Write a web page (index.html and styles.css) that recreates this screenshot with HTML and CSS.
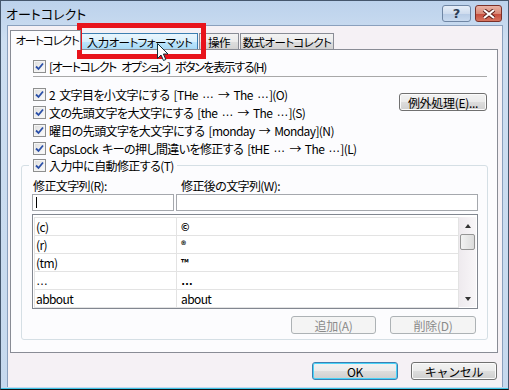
FILE: index.html
```html
<!DOCTYPE html>
<html lang="ja">
<head>
  <meta charset="UTF-8">
  <title>オートコレクト</title>
  <link rel="stylesheet" href="styles.css">
</head>
<body>
  <div class="window">
    <div class="titlebar">
      <span class="title">オートコレクト</span>
      <div class="caption">
        <span class="cap-btn help">?</span>
        <span class="cap-btn close">
          <svg width="14" height="10" viewBox="0 0 14 10"><path d="M2 1 L12 9 M12 1 L2 9" stroke="#5a1f1a" stroke-width="4"/><path d="M2 1 L12 9 M12 1 L2 9" stroke="#fff" stroke-width="2.2"/></svg>
        </span>
      </div>
    </div>

    <div class="client">
      <div class="tabs">
        <span class="tab active">オートコレクト</span>
        <span class="tab hover">入力オートフォーマット</span>
        <span class="tab t3">操作</span>
        <span class="tab t4">数式オートコレクト</span>
      </div>

      <div class="panel">
        <div class="row first"><span class="cb"><svg viewBox="0 0 9 9"><path d="M1 4.5 L3.5 7 L8 1.5"/></svg></span><span class="tight">[オートコレクト オプション] ボタンを表示する(H)</span></div>
        <div class="sep"></div>

        <div class="options">
          <div class="opt-list">
            <div class="row"><span class="cb"><svg viewBox="0 0 9 9"><path d="M1 4.5 L3.5 7 L8 1.5"/></svg></span>2 文字目を小文字にする [THe&nbsp;<span class="el">…</span>&nbsp;→ The&nbsp;<span class="el">…</span>](O)</div>
            <div class="row"><span class="cb"><svg viewBox="0 0 9 9"><path d="M1 4.5 L3.5 7 L8 1.5"/></svg></span>文の先頭文字を大文字にする [the&nbsp;<span class="el">…</span>&nbsp;→ The&nbsp;<span class="el">…</span>](S)</div>
            <div class="row"><span class="cb"><svg viewBox="0 0 9 9"><path d="M1 4.5 L3.5 7 L8 1.5"/></svg></span>曜日の先頭文字を大文字にする [monday → Monday](N)</div>
            <div class="row"><span class="cb"><svg viewBox="0 0 9 9"><path d="M1 4.5 L3.5 7 L8 1.5"/></svg></span>CapsLock キーの押し間違いを修正する [tHE&nbsp;<span class="el">…</span>&nbsp;→ The&nbsp;<span class="el">…</span>](L)</div>
          </div>
          <button class="btn except">例外処理(E)...</button>
        </div>

        <fieldset class="group">
          <legend class="row"><span class="cb"><svg viewBox="0 0 9 9"><path d="M1 4.5 L3.5 7 L8 1.5"/></svg></span>入力中に自動修正する(T)</legend>
          <div class="labels">
            <span>修正文字列(R):</span>
            <span class="lbl-to">修正後の文字列(W):</span>
          </div>
          <div class="inputs">
            <div class="input"><span class="caret"></span></div>
            <div class="input"></div>
          </div>
          <div class="list">
            <div class="items">
              <div class="item"><span class="c1">(c)</span><span class="c2 sym">©</span></div>
              <div class="item"><span class="c1">(r)</span><span class="c2 sym">®</span></div>
              <div class="item"><span class="c1">(tm)</span><span class="c2 sym">™</span></div>
              <div class="item"><span class="c1 el">…</span><span class="c2 el bold">…</span></div>
              <div class="item"><span class="c1">abbout</span><span class="c2">about</span></div>
            </div>
            <div class="scrollbar">
              <span class="arrow up"></span>
              <span class="thumb"></span>
              <span class="track"></span>
              <span class="arrow down"></span>
            </div>
          </div>
          <div class="group-btns">
            <button class="btn add" disabled>追加(A)</button>
            <button class="btn del" disabled>削除(D)</button>
          </div>
        </fieldset>
      </div>

      <div class="footer">
        <button class="btn default">OK</button>
        <button class="btn">キャンセル</button>
      </div>
    </div>

    <div class="mark"></div>
    <svg class="cursor" width="12" height="19" viewBox="0 0 12 19"><path d="M0.5 0.5 L0.5 15.5 L4 12 L6.5 17.5 L8.8 16.5 L6.4 11 L11 11 Z" fill="#fff" stroke="#10303a" stroke-width="1"/></svg>
  </div>
</body>
</html>
```

FILE: styles.css
```css
* { box-sizing: border-box; }
body { margin: 0; font-family: "Noto Sans CJK JP", sans-serif; font-size: 12px; letter-spacing: -0.6px; word-spacing: 2px; color: #000; font-feature-settings: "palt"; }

.window { position: relative; width: 509px; height: 390px; overflow: hidden; padding: 0 5px 2px 6px;
  background: linear-gradient(#bcd2ec, #cddef1 40px, #c6d9ee);
  border: 1px solid #45576d; border-bottom-color: #111; box-shadow: inset 0 -1px #3ec4e6; }

/* title bar */
.titlebar { display: flex; align-items: center; height: 24px; margin: 0 -5px 0 -6px; padding: 0 6px 0 5px; }
.title { font-size: 13px; letter-spacing: 0; color: #000; }
.caption { display: flex; gap: 4px; margin-left: auto; margin-top: 1px; }
.cap-btn { display: flex; align-items: center; justify-content: center; height: 17px; border-radius: 3px; }
.help { width: 29px; border: 1px solid #6f86a4; background: linear-gradient(#e6eef8, #cfdcee 50%, #b7cbe5 51%, #c9daef);
  font-family: "DejaVu Sans", sans-serif; font-size: 13px; font-weight: bold; color: #2d3e56; letter-spacing: 0; }
.close { width: 27px; border: 1px solid #7b3028; background: linear-gradient(#eab3a6, #d98a78 50%, #c4493a 51%, #d77560); }

/* client area */
.client { height: 362px; border: 1px solid #8aa0bd; border-bottom: 0; background: #f5f1f5; padding: 0 4px 0 2px; }

.tabs { display: flex; align-items: flex-end; height: 23px; }
.tab { display: flex; align-items: center; justify-content: center; height: 16px; border: 1px solid #898c95; border-bottom: 0;
  background: linear-gradient(#f3f3f3, #ebebeb 50%, #dedede 51%, #d2d2d2); white-space: nowrap; font-size: 11.5px; letter-spacing: -0.6px; }
.tab.active { width: 71px; height: 20px; margin-bottom: -1px; position: relative; z-index: 1; background: #fcfcfe; padding: 0 0 1px 3px; letter-spacing: -1.1px; }
.tab.hover { width: 117px; border-color: #3c7fb1; background: linear-gradient(#eaf6fd, #d9f0fc 50%, #bee6fd 51%, #a7d9f5); }
.tab.t3 { width: 40px; margin-left: 1px; }
.tab.t4 { width: 94px; margin-left: 1px; }

.panel { height: 304px; width: 488px; border: 1px solid #898c95; background: #fcfcfe; }

.row { display: flex; align-items: center; height: 18px; white-space: nowrap; }
.row.first { margin-top: 7px; padding-left: 22px; }
.tight { letter-spacing: -1.4px; word-spacing: 4px; }
.cb { width: 13px; height: 13px; margin-right: 3px; border: 1px solid #8e8f8f; background: linear-gradient(135deg, #dcdcdc, #fdfdfd);
  box-shadow: inset 0 0 0 1px #f4f4f4; display: flex; align-items: center; justify-content: center; flex-shrink: 0; }
.cb svg { width: 9px; height: 9px; }
.cb path { fill: none; stroke: #2a4fa8; stroke-width: 1.8; }
.el { font-family: "Liberation Sans", sans-serif; letter-spacing: 0; }

.sep { height: 1px; margin: 1px 10px 0 22px; background: #a8a8a8; }

.options { display: flex; margin-top: 8px; padding: 0 10px 0 22px; }
.btn { font-family: inherit; font-size: 12px; letter-spacing: -0.3px; height: 18px; padding: 0; color: #000; border: 1px solid #707070; border-radius: 3px;
  background: linear-gradient(#f2f2f2, #ebebeb 50%, #dddddd 51%, #cfcfcf); box-shadow: inset 0 0 0 1px #fbfbfb; }
.btn.except { width: 88px; margin: 8px 0 0 auto; }
.btn:disabled { color: #8a8a8a; border-color: #adb2b5; background: #f4f4f4; box-shadow: none; }
.btn.default { border-color: #3c7fb1; box-shadow: inset 0 0 0 1px #48d4f9; }

.group { margin: -1px 9px 0 10px; padding: 0 9px 5px 10px; border: 1px solid #d5dfe5; border-radius: 3px; min-width: 0; }
.group legend { padding: 0 3px 0 4px; margin-left: -3px; }

.labels { display: grid; grid-template-columns: 144px 1fr; height: 18px; margin-top: 2px; align-items: center; padding-left: 1px; }
.lbl-to { padding-left: 4px; }
.inputs { display: grid; grid-template-columns: 142px 1fr; gap: 2px; }
.input { height: 17px; border: 1px solid #a5a8ad; background: #fff; display: flex; align-items: center; padding-left: 3px; }
.caret { width: 1px; height: 11px; background: #000; }

.list { display: flex; height: 95px; margin-top: 3px; padding: 2px 1px 0 1px; border: 1px solid #828790; background: #fff; }
.items { flex: 1; border-top: 1px solid #e3e3e3; border-left: 1px solid #e3e3e3; }
.item { display: flex; height: 18px; border-bottom: 1px solid #e3e3e3; }
.item span { display: flex; align-items: center; border-right: 1px solid #e3e3e3; }
.c1 { width: 142px; padding-left: 1px; }
.c2 { flex: 1; padding-left: 4px; }
.sym { font-size: 10px; font-weight: bold; }
.bold { font-weight: bold; }

.scrollbar { width: 17px; height: 90px; display: flex; flex-direction: column; align-items: center;
  background: linear-gradient(90deg, #eeeaee, #f8f6f8); }
.arrow { width: 17px; height: 17px; display: flex; align-items: center; justify-content: center; }
.arrow::after { content: ""; border-left: 3px solid transparent; border-right: 3px solid transparent; }
.arrow.up::after { border-bottom: 4px solid #333; }
.arrow.down::after { border-top: 4px solid #333; }
.thumb { width: 15px; height: 16px; border: 1px solid #959595; border-radius: 2px; background: linear-gradient(90deg, #f2f2f2, #dcdcdc); }
.track { flex: 1; }

.group-btns { display: flex; justify-content: flex-end; gap: 14px; margin-top: 7px; padding-right: 2px; }
.btn.add { width: 85px; }
.btn.del { width: 86px; }

.footer { display: flex; justify-content: flex-end; gap: 13px; margin-top: 9px; padding-right: 1px; }
.footer .btn { width: 86px; }

/* annotation over the screenshot */
.mark { position: absolute; left: 76px; top: 22px; width: 129px; height: 36px; border: 5px solid #e8141c; }
.cursor { position: absolute; left: 156px; top: 42px; }
```
